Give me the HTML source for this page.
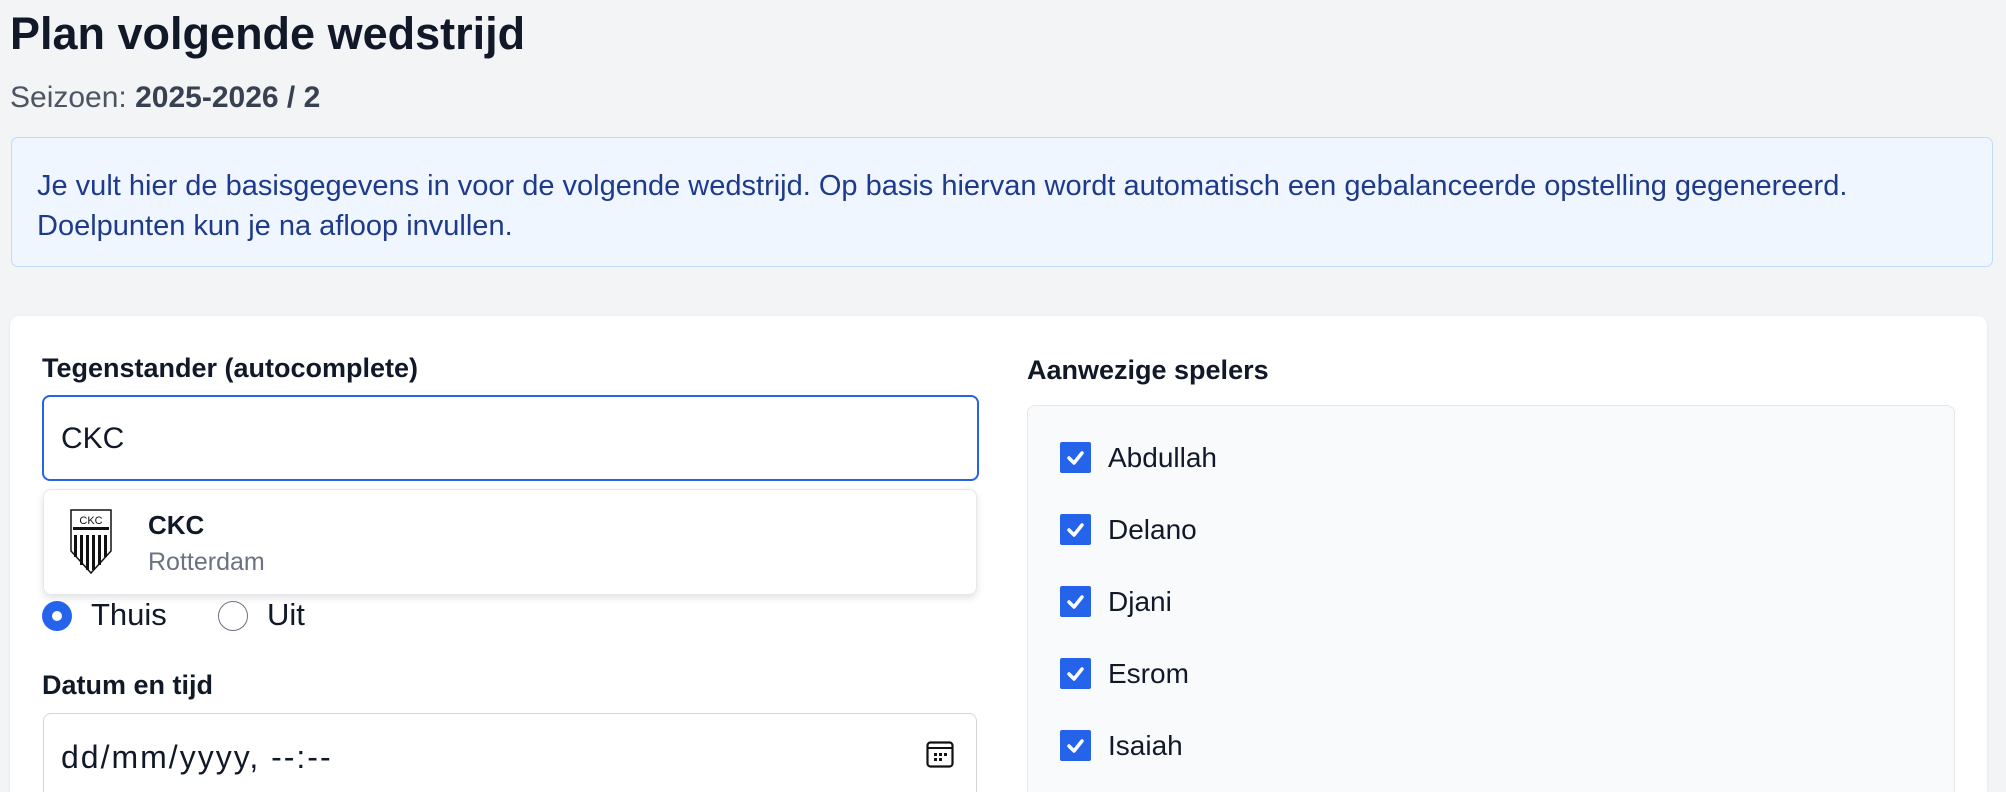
<!DOCTYPE html>
<html><head><meta charset="utf-8"><style>
*{box-sizing:border-box;margin:0;padding:0}
html,body{width:2006px;height:792px;overflow:hidden;background:#f3f4f6;font-family:"Liberation Sans",Arial,sans-serif;color:#111827}
.a{position:absolute;white-space:nowrap}
h1{position:absolute;left:10px;top:6px;font-size:45px;font-weight:700;color:#111827;line-height:56px}
.seiz{left:10px;top:80px;font-size:30px;color:#4b5563;line-height:36px}
.seiz b{font-weight:600;color:#374151}
.info{position:absolute;left:11px;top:137px;width:1982px;height:130px;background:#eff6ff;border:1.5px solid #bfdbfe;border-radius:7px}
.info p{position:absolute;left:25px;top:28px;font-size:29px;line-height:40px;color:#1e3a8a}
.card{position:absolute;left:10px;top:316px;width:1977px;height:476px;background:#fff;border-radius:9px 9px 0 0;box-shadow:0 1px 3px rgba(0,0,0,.08)}
.lbl{font-size:27px;font-weight:700;color:#111827;line-height:30px}
.inp{position:absolute;left:42px;top:395px;width:937px;height:86px;border:2px solid #2563eb;border-radius:8px;background:#fff}
.dd{position:absolute;left:43px;top:489px;width:934px;height:106px;border:1px solid #e5e7eb;border-radius:8px;background:#fff;box-shadow:0 3px 8px rgba(0,0,0,.12)}
.radio{position:absolute;width:30px;height:30px;border-radius:50%}
.date{position:absolute;left:43px;top:713px;width:934px;height:79px;border:1.5px solid #d1d5db;border-bottom:none;border-radius:8px 8px 0 0;background:#fff}
.box{position:absolute;left:1027px;top:405px;width:928px;height:387px;background:#f9fafb;border:1.5px solid #e5e7eb;border-bottom:none;border-radius:8px 8px 0 0}
.cb{position:absolute;left:1060px;width:31px;height:31px;background:#2563eb;border-radius:2px}
.pl{position:absolute;left:1108px;font-size:28px;line-height:32px;color:#111827}
</style></head><body>
<h1>Plan volgende wedstrijd</h1>
<div class="a seiz">Seizoen: <b>2025-2026 / 2</b></div>
<div class="info"><p>Je vult hier de basisgegevens in voor de volgende wedstrijd. Op basis hiervan wordt automatisch een gebalanceerde opstelling gegenereerd.<br>Doelpunten kun je na afloop invullen.</p></div>
<div class="card"></div>
<div class="a lbl" style="left:42px;top:353px">Tegenstander (autocomplete)</div>
<div class="inp"></div>
<div class="a" style="left:61px;top:421px;font-size:30px;line-height:36px">CKC</div>
<div class="dd"></div>
<svg class="a" style="left:70px;top:509px" width="42" height="65" viewBox="0 0 42 65">
<path d="M1 1H41V42L21 64L1 42Z" fill="#fff" stroke="#111" stroke-width="1.5"/>
<text x="21" y="15" font-size="11" text-anchor="middle" font-family="Liberation Sans" fill="#111">CKC</text>
<rect x="3" y="18" width="36" height="3" fill="#111"/>
<g fill="#111"><rect x="4" y="26" width="3" height="22"/><rect x="10" y="26" width="3" height="30"/><rect x="16" y="26" width="3" height="35"/><rect x="22" y="26" width="3" height="35"/><rect x="28" y="26" width="3" height="30"/><rect x="34" y="26" width="3" height="22"/></g>
</svg>
<div class="a" style="left:148px;top:510px;font-size:26px;font-weight:700;line-height:30px">CKC</div>
<div class="a" style="left:148px;top:548px;font-size:25px;color:#6b7280;line-height:28px">Rotterdam</div>
<div class="radio" style="left:42px;top:601px;background:#2563eb"><div style="position:absolute;left:10px;top:10px;width:10px;height:10px;border-radius:50%;background:#fff"></div></div>
<div class="a" style="left:91px;top:597px;font-size:31px;line-height:36px">Thuis</div>
<div class="radio" style="left:218px;top:601px;border:1.5px solid #6b7280;background:#fff"></div>
<div class="a" style="left:267px;top:597px;font-size:31px;line-height:36px">Uit</div>
<div class="a lbl" style="left:42px;top:670px">Datum en tijd</div>
<div class="date"></div>
<div class="a" style="left:61px;top:739px;font-size:32px;letter-spacing:2px;line-height:36px">dd/mm/yyyy, --:--</div>
<svg class="a" style="left:926px;top:741px" width="28" height="27" viewBox="0 0 28 27"><rect x="1.5" y="1.5" width="25" height="24" rx="3" fill="none" stroke="#111" stroke-width="2.2"/><line x1="1.5" y1="7" x2="26.5" y2="7" stroke="#111" stroke-width="2"/><g fill="#111"><rect x="8" y="12" width="3" height="3"/><rect x="13" y="12" width="3" height="3"/><rect x="18" y="12" width="3" height="3"/><rect x="8" y="17" width="3" height="3"/><rect x="13" y="17" width="3" height="3"/></g></svg>
<div class="a lbl" style="left:1027px;top:355px">Aanwezige spelers</div>
<div class="box"></div>
<div class="cb" style="top:442px"></div><div class="pl" style="top:442px">Abdullah</div>
<div class="cb" style="top:514px"></div><div class="pl" style="top:514px">Delano</div>
<div class="cb" style="top:586px"></div><div class="pl" style="top:586px">Djani</div>
<div class="cb" style="top:658px"></div><div class="pl" style="top:658px">Esrom</div>
<div class="cb" style="top:730px"></div><div class="pl" style="top:730px">Isaiah</div>
<svg class="a" style="left:1060px;top:442px" width="31" height="320" viewBox="0 0 31 320"><g fill="none" stroke="#fff" stroke-width="3.5" stroke-linecap="round" stroke-linejoin="round">
<path d="M9 16l5 5 8-10"/><path d="M9 88l5 5 8-10"/><path d="M9 160l5 5 8-10"/><path d="M9 232l5 5 8-10"/><path d="M9 304l5 5 8-10"/></g></svg>
</body></html>
